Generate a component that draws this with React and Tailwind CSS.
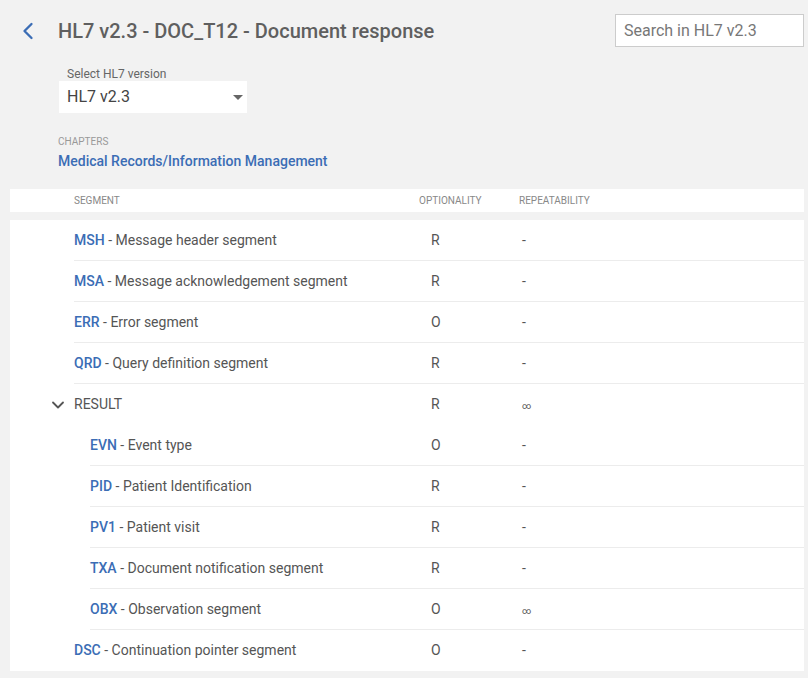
import { ChevronLeft, ChevronDown } from "lucide-react";

const rows = [
  { code: "MSH", name: "Message header segment", opt: "R", rep: "-" },
  { code: "MSA", name: "Message acknowledgement segment", opt: "R", rep: "-" },
  { code: "ERR", name: "Error segment", opt: "O", rep: "-" },
  { code: "QRD", name: "Query definition segment", opt: "R", rep: "-" },
];

const resultRows = [
  { code: "EVN", name: "Event type", opt: "O", rep: "-" },
  { code: "PID", name: "Patient Identification", opt: "R", rep: "-" },
  { code: "PV1", name: "Patient visit", opt: "R", rep: "-" },
  { code: "TXA", name: "Document notification segment", opt: "R", rep: "-" },
  { code: "OBX", name: "Observation segment", opt: "O", rep: "∞" },
];

const Rep = ({ value }) =>
  value === "∞" ? <span className="text-[9px]">∞</span> : <span>{value}</span>;

const Cells = ({ seg, opt, rep, offset }) => (
  <>
    <div className={offset === 80 ? "w-[329px] shrink-0" : "w-[345px] shrink-0"}>{seg}</div>
    <div className="w-[100px] shrink-0 pl-[12px]">{opt}</div>
    <div className="pl-[3px]">
      <Rep value={rep} />
    </div>
  </>
);

const SegmentLabel = ({ code, name }) => (
  <span>
    <span className="font-medium text-[#3b6db5]">{code}</span>
    <span> - {name}</span>
  </span>
);

export default function App() {
  return (
    <div
      className="min-h-[678px] bg-[#f2f2f2] text-[#555]"
      style={{ fontFamily: "Roboto, 'Liberation Sans', sans-serif" }}
    >
      <div className="flex items-center justify-between pt-[14px] pr-[4px]">
        <div className="flex items-center pl-[14px]">
          <ChevronLeft className="w-[28px] h-[28px] text-[#3b6db5]" strokeWidth={2} />
          <h1 className="ml-[16px] text-[20px] font-medium text-[#5f5f5f]">
            HL7 v2.3 - DOC_T12 - Document response
          </h1>
        </div>
        <div className="w-[189px] h-[33px] bg-white border border-[#cccccc] flex items-center px-[8px] text-[16px] text-[#777]">
          Search in HL7 v2.3
        </div>
      </div>

      <div className="pl-[59px] mt-[20px]">
        <div className="pl-[8px] text-[12px] leading-[14px] text-[#666]">Select HL7 version</div>
        <div className="w-[188px] h-[32px] bg-white flex items-center justify-between pl-[8px] pr-[4px] text-[16px] text-[#444]">
          <span>HL7 v2.3</span>
          <svg width="10" height="5" viewBox="0 0 10 5">
            <path d="M0 0h10L5 5z" fill="#666" />
          </svg>
        </div>
      </div>

      <div className="pl-[58px] mt-[23px]">
        <div className="text-[10px] leading-[12px] text-[#999]">CHAPTERS</div>
        <div className="mt-[3px] text-[14px] font-medium text-[#3b6db5]">
          Medical Records/Information Management
        </div>
      </div>

      <div className="ml-[10px] mt-[17px] mr-[4px]">
        <div className="bg-white h-[23px] flex items-center pl-[64px] text-[10px] text-[#888]">
          <div className="w-[345px] shrink-0">SEGMENT</div>
          <div className="w-[100px] shrink-0">OPTIONALITY</div>
          <div>REPEATABILITY</div>
        </div>

        <div className="bg-white mt-[8px] text-[14px]">
          {rows.map((r) => (
            <div key={r.code} className="ml-[64px] h-[41px] flex items-center border-b border-[#ececec]">
              <Cells seg={<SegmentLabel code={r.code} name={r.name} />} opt={r.opt} rep={r.rep} />
            </div>
          ))}

          <div className="h-[41px] flex items-center">
            <div className="w-[64px] shrink-0 flex justify-end pr-[6px]">
              <ChevronDown className="w-[20px] h-[20px] text-[#555]" strokeWidth={2.2} />
            </div>
            <Cells seg="RESULT" opt="R" rep="∞" />
          </div>

          {resultRows.map((r) => (
            <div key={r.code} className="ml-[80px] h-[41px] flex items-center border-b border-[#ececec]">
              <Cells offset={80} seg={<SegmentLabel code={r.code} name={r.name} />} opt={r.opt} rep={r.rep} />
            </div>
          ))}

          <div className="ml-[64px] h-[41px] flex items-center">
            <Cells seg={<SegmentLabel code="DSC" name="Continuation pointer segment" />} opt="O" rep="-" />
          </div>
        </div>
      </div>
    </div>
  );
}
